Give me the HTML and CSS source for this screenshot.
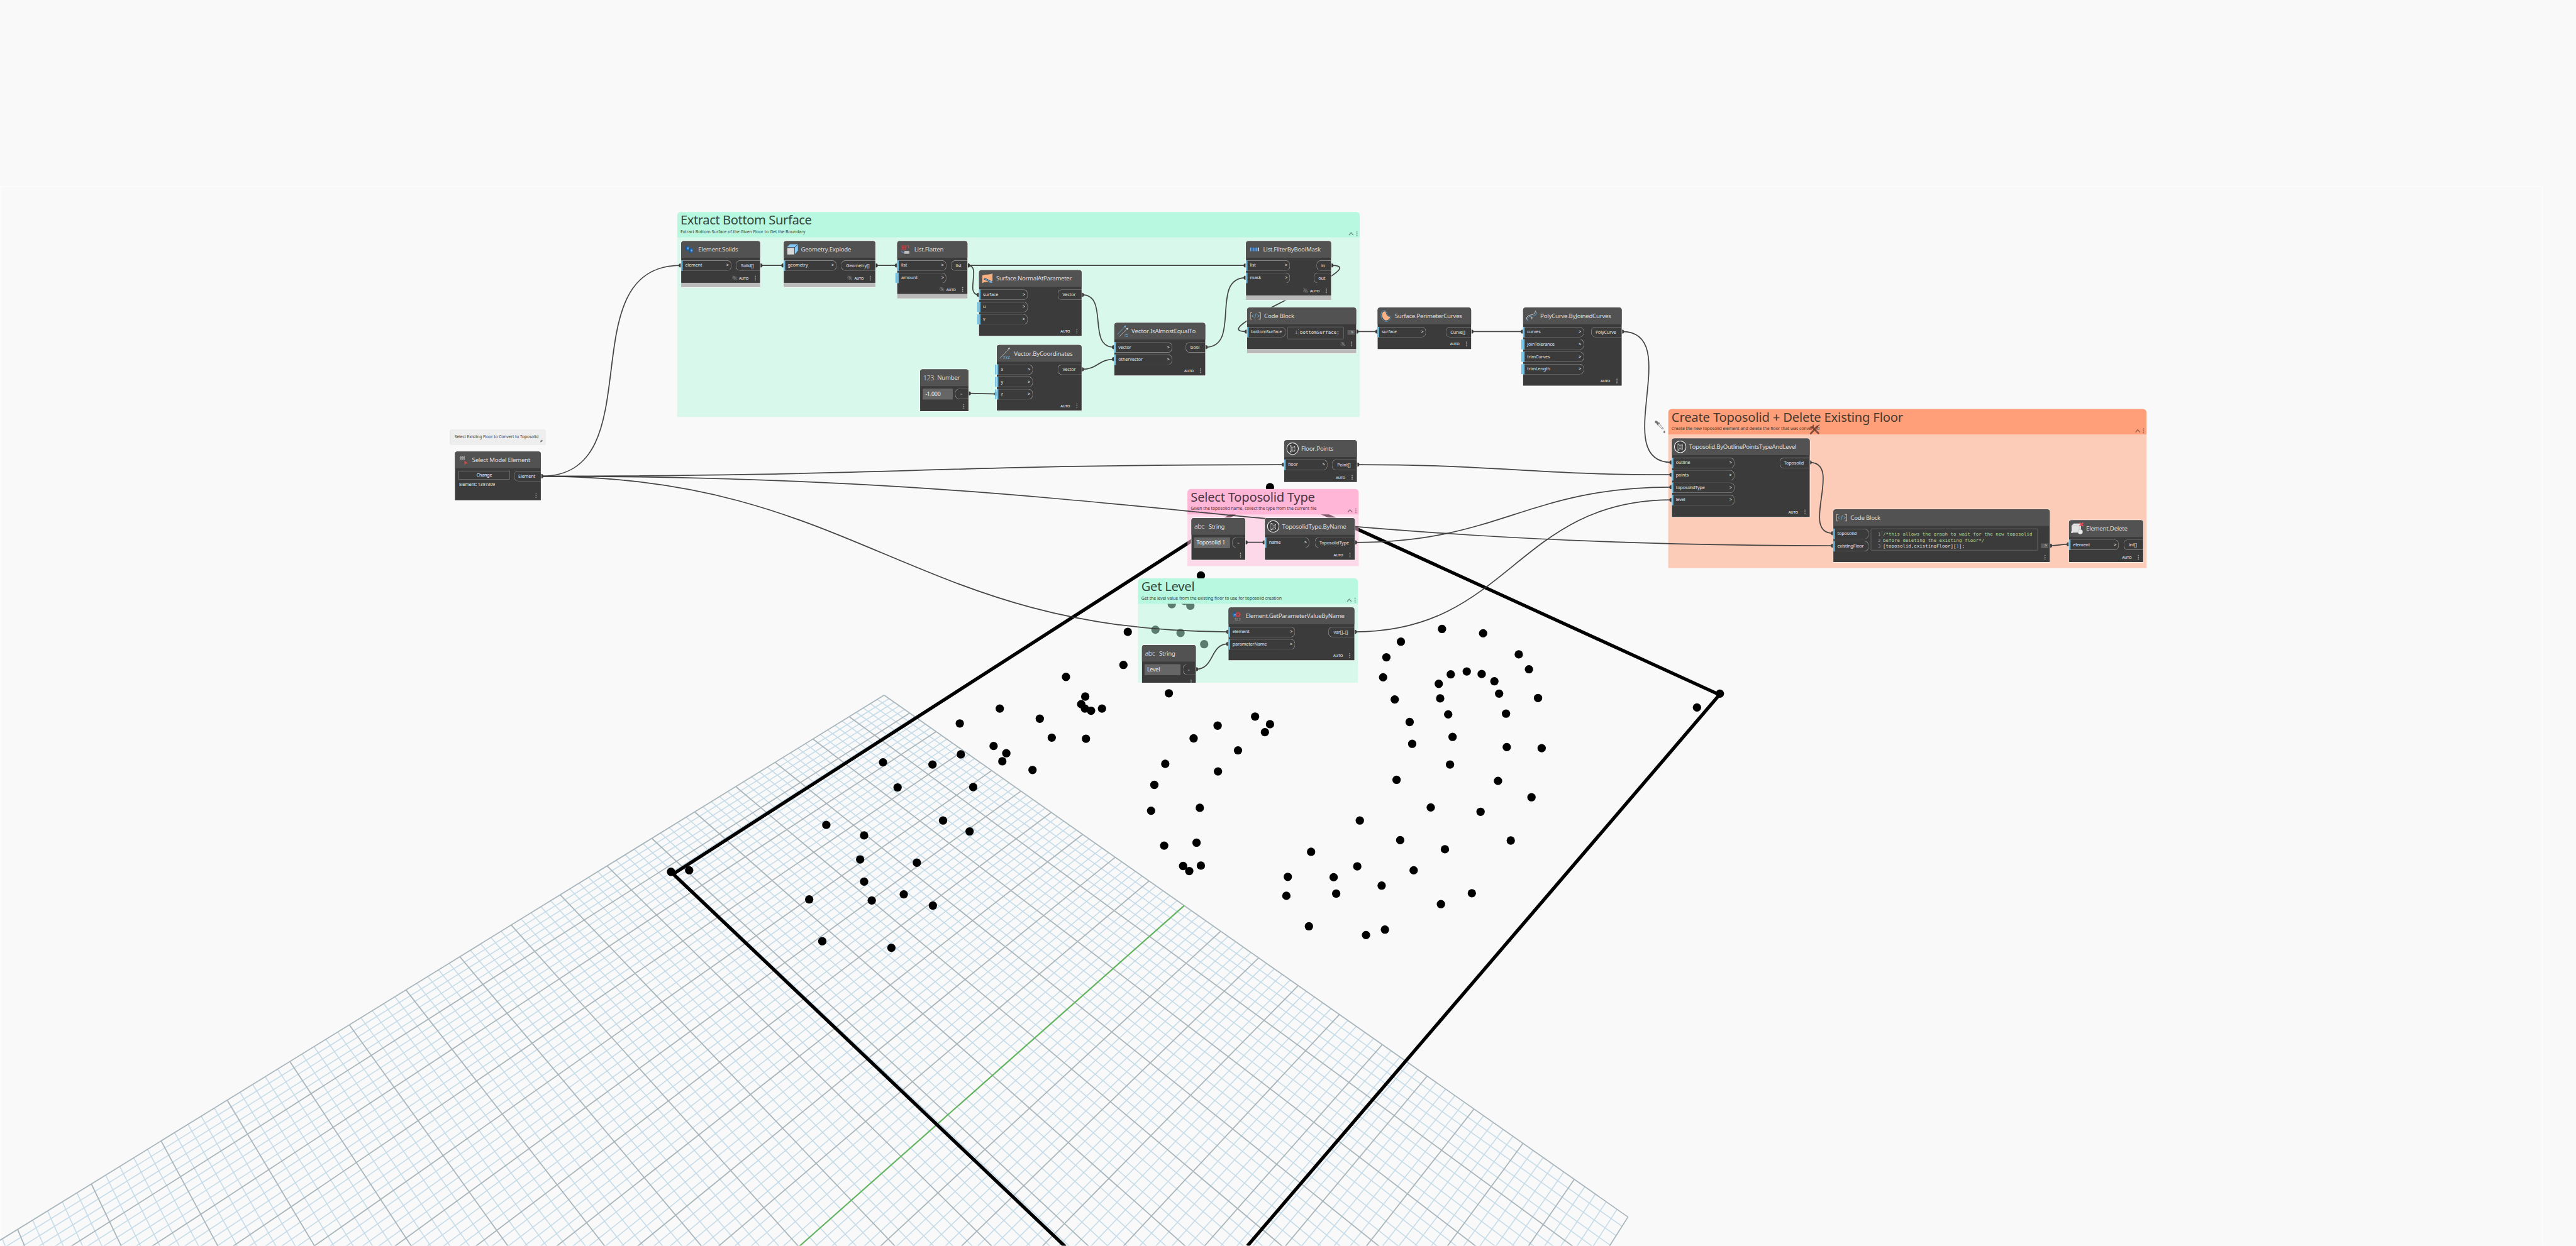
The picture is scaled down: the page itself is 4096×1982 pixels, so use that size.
FILE: index.html
```html
<!DOCTYPE html>
<html lang="en">
<head>
<meta charset="utf-8">
<title>Floor to Toposolid graph</title>
<link rel="stylesheet" href="styles.css">
</head>
<body>
<svg class="defs" width="0" height="0">
  <symbol id="eye" viewBox="0 0 16 16"><path d="M1 8C3 4.5 5.300 3 8 3s5 1.500 7 5c-2 3.500-4.300 5-7 5S3 11.500 1 8zM1.500 1.500l13 13M4 1.500l11 11" fill="none" stroke="#a8a8a8" stroke-width=".9" stroke-dasharray="2 .7"/><circle cx="8" cy="8" r="2.400" fill="none" stroke="#a8a8a8" stroke-width=".9"/></symbol>
  <symbol id="dots" viewBox="0 0 4 14"><circle cx="2" cy="2" r="1.500" fill="#a9a9a9"/><circle cx="2" cy="7" r="1.500" fill="#a9a9a9"/><circle cx="2" cy="12" r="1.500" fill="#a9a9a9"/></symbol>
  <symbol id="menu" viewBox="0 0 30 16"><path d="M2 12l6-7 6 7" fill="none" stroke="#000" stroke-opacity=".42" stroke-width="2.400"/><g fill="none" stroke="#000" stroke-opacity=".5" stroke-width=".9"><circle cx="24" cy="3" r="1.300"/><circle cx="24" cy="8" r="1.300"/><circle cx="24" cy="13" r="1.300"/></g></symbol>
  <symbol id="topo" viewBox="0 0 34 34"><circle cx="17" cy="17" r="16" fill="#3d3d3d" stroke="#f2f2f2" stroke-width="1.900"/><path d="M10.500 8.500l13 3v12.500l-13 3z" fill="#2b2b2b" stroke="#d5d5d5" stroke-width="1.100"/><path d="M14 12.500l7 1.500v7l-7 1.500zM11 9l3 3.500M23 12l-2 2M23 23.500l-2-2.500M11 26.500l3-4M17.500 13v9" fill="none" stroke="#d5d5d5"/><g fill="#eee"><circle cx="11.500" cy="9.500" r="1.200"/><circle cx="22.500" cy="12" r="1.200"/><circle cx="22.500" cy="23" r="1.200"/><circle cx="11.500" cy="25.500" r="1.200"/></g></symbol>
  <symbol id="code" viewBox="0 0 30 20"><path d="M6 1H1v18h5M24 1h5v18h-5" fill="none" stroke="#e8d9cb" stroke-width="1.400"/><path d="M9.500 6.500L4.500 10l5 3.500M20.500 6.500l5 3.500-5 3.500M17 3l-4.500 13.500" fill="none" stroke="#6db9e8" stroke-width="1.400"/></symbol>
</svg>

<main class="stage">
  <div class="viewport"></div>
  <svg class="layer preview" viewBox="0 0 7083 3427">
    <g id="minor"></g>
    <g id="major"></g>
    <line id="axis" class="axis"/>
    <polyline class="outline" points="2929,3429 1851,2404 3495,1347 4728,1911 3430,3427"/>
    <g id="points"></g>
  </svg>

  <section class="group mint" id="g-extract">
    <header><h2>Extract Bottom Surface</h2><p>Extract Bottom Surface of the Given Floor to Get the Boundary</p><svg class="menu"><use href="#menu"/></svg></header>
  </section>
  <section class="group pink" id="g-type">
    <header><h2>Select Toposolid Type</h2><p>Given the toposolid name, collect the type from the current file</p><svg class="menu"><use href="#menu"/></svg></header>
  </section>
  <section class="group mint" id="g-level">
    <header><h2>Get Level</h2><p>Get the level value from the existing floor to use for toposolid creation</p><svg class="menu"><use href="#menu"/></svg></header>
  </section>
  <section class="group orange" id="g-create">
    <header><h2>Create Toposolid + Delete Existing Floor</h2><p>Create the new toposolid element and delete the floor that was converted</p><svg class="menu"><use href="#menu"/></svg></header>
  </section>

  <svg class="layer" viewBox="0 0 7083 3427">
    <g transform="translate(4976 1168)" class="tools"><path d="M3 24.500L21 5" stroke-width="5"/><path d="M17 8l9-7" stroke-width="2.500"/><path d="M24 24L7 7" stroke-width="5"/><path d="M3 7a5 5 0 0 0 7-5" stroke-width="4"/></g>
    <g transform="translate(4549 1156)"><path d="M2 2c3-2 7 0 8 4l3 0 2 2-6 6-2-2 0-3C3 9 0 5 2 2z" fill="#757575"/><path d="M9 12l11 11 4 1-1-4L13 9" fill="none" stroke="#757575" stroke-width="1.600"/><path d="M27 28c-3 4-3 7 0 7s4-3 0-7z" fill="#757575"/></g>
    <g id="wires"></g>
  </svg>

  <aside class="note"><p>Select Existing Floor to Convert to Toposolid</p><svg viewBox="0 0 10 10"><path d="M5.500 0L10 4 8 4.500 6.500 7 5 8 4 6.800.5 9.800 3 6 1.500 4.500 3 3.500 5.200 2z" fill="#777"/></svg></aside>

  <article class="node" id="n-select">
    <header><svg class="icon" viewBox="0 0 30 30"><path d="M7 5h12M5 8.200h14M5 11h14M5 14h14M8 5v3M13 5v3M18 5v3M6 8v3M11 8v3M16 8v3M8 11v3M13 11v3M18 11v3" stroke="#bcbcbc" stroke-width="1.200"/><path d="M18 17l10 7.500-5.500.5-4 4z" fill="#d24a48"/></svg><h3>Select Model Element</h3></header>
    <div class="ports">
      <div class="pick"><button>Change</button><span>Element: 1397309</span></div>
      <div class="col"><div class="out">Element</div></div>
    </div>
    <footer><svg class="dots"><use href="#dots"/></svg></footer>
  </article>

  <article class="node frozen" id="n-solids">
    <header><svg class="icon" viewBox="0 0 30 30"><defs><radialGradient id="ball" cx=".65" cy=".5" r=".6"><stop offset="0" stop-color="#9fd0f5"/><stop offset=".4" stop-color="#2877c2"/><stop offset="1" stop-color="#124a87"/></radialGradient></defs><ellipse cx="9" cy="12" rx="5.500" ry="7" fill="url(#ball)"/><ellipse cx="19" cy="18" rx="5.500" ry="7" fill="url(#ball)"/></svg><h3>Element.Solids</h3></header>
    <div class="ports"><div class="col"><div class="in">element<i>&gt;</i></div></div><div class="col"><div class="out">Solid[]</div></div></div>
    <footer><svg class="eye"><use href="#eye"/></svg><span>AUTO</span><svg class="dots"><use href="#dots"/></svg></footer>
  </article>

  <article class="node frozen" id="n-explode">
    <header><svg class="icon" viewBox="0 0 30 30"><path d="M1 10h20v19H1z" fill="#dadada"/><path d="M1 9L9 1h22l-9 8z" fill="#82c7f5"/><path d="M22 29V10l9-9v17z" fill="#82c7f5"/><path d="M1 29V10h20.500v19M21.500 10L31 1" fill="none" stroke="#2f3a44" stroke-width="1.300"/></svg><h3>Geometry.Explode</h3></header>
    <div class="ports"><div class="col"><div class="in">geometry<i>&gt;</i></div></div><div class="col"><div class="out">Geometry[]</div></div></div>
    <footer><svg class="eye"><use href="#eye"/></svg><span>AUTO</span><svg class="dots"><use href="#dots"/></svg></footer>
  </article>

  <article class="node frozen" id="n-flatten">
    <header><svg class="icon" viewBox="0 0 30 30"><path d="M4 4h12v12H4z" fill="#c0474b"/><path d="M8 4v12M12 4v12M4 8h12M4 12h12" stroke="#7c3638"/><path d="M18 5h5v6" fill="none" stroke="#a25557" stroke-width="2"/><path d="M4 19c1 4 3 5 7 5" fill="none" stroke="#5b7fb5" stroke-width="2.200"/><path d="M12 19h13v8H12z" fill="#e5e5e5"/><path d="M15 19v8M18.500 19v8M22 19v8M12 22h13M12 25h13" stroke="#777" stroke-width=".8"/></svg><h3>List.Flatten</h3></header>
    <div class="ports"><div class="col"><div class="in">list<i>&gt;</i></div><div class="in open">amount<i>&gt;</i></div></div><div class="col"><div class="out">list</div></div></div>
    <footer><svg class="eye"><use href="#eye"/></svg><span>AUTO</span><svg class="dots"><use href="#dots"/></svg></footer>
  </article>

  <article class="node" id="n-normal">
    <header><svg class="icon" viewBox="0 0 30 30"><path d="M1 7c8-5 20 0 28-6v21c-8 5-20 0-28 6z" fill="#f8b183"/><path d="M6 15l18 9" stroke="#24384a" stroke-width="4.500"/><path d="M6 15l18 9" stroke="#69b5e8" stroke-width="2"/><path d="M29 27l-9-.5 4-7z" fill="#69b5e8"/></svg><h3>Surface.NormalAtParameter</h3></header>
    <div class="ports"><div class="col"><div class="in">surface<i>&gt;</i></div><div class="in open">u<i>&gt;</i></div><div class="in open">v<i>&gt;</i></div></div><div class="col"><div class="out">Vector</div></div></div>
    <footer><span>AUTO</span><svg class="dots"><use href="#dots"/></svg></footer>
  </article>

  <article class="node" id="n-number">
    <header><span class="glyph">123</span><h3>Number</h3></header>
    <div class="ports"><div class="field">-1.000</div><div class="col"><div class="out tiny">&gt;</div></div></div>
    <footer><svg class="dots"><use href="#dots"/></svg></footer>
  </article>

  <article class="node" id="n-coords">
    <header><svg class="icon" viewBox="0 0 30 34"><path d="M0 31L26 3" stroke="#e6e6e6" stroke-width="1.200"/><path d="M29 0l-2 6-4-3.500z" fill="#e6e6e6"/><text x="9" y="34" class="xyz">XYZ</text></svg><h3>Vector.ByCoordinates</h3></header>
    <div class="ports"><div class="col"><div class="in open">x<i>&gt;</i></div><div class="in open">y<i>&gt;</i></div><div class="in open">z<i>&gt;</i></div></div><div class="col"><div class="out">Vector</div></div></div>
    <footer><span>AUTO</span><svg class="dots"><use href="#dots"/></svg></footer>
  </article>

  <article class="node" id="n-equal">
    <header><svg class="icon" viewBox="0 0 32 34"><path d="M0 27L23 3" stroke="#6db9e8" stroke-width="1.400"/><path d="M26 0l-2 6.500-5-4z" fill="#6db9e8"/><path d="M6 33L29 10" stroke="#e6e6e6" stroke-width="1.200"/><path d="M32 7l-2 6-4.500-4z" fill="#e6e6e6"/><path d="M22 27c3-3 6 3 9 0M22 32c3-3 6 3 9 0" fill="none" stroke="#6db9e8" stroke-width="1.800"/></svg><h3>Vector.IsAlmostEqualTo</h3></header>
    <div class="ports"><div class="col"><div class="in">vector<i>&gt;</i></div><div class="in">otherVector<i>&gt;</i></div></div><div class="col"><div class="out">bool</div></div></div>
    <footer><span>AUTO</span><svg class="dots"><use href="#dots"/></svg></footer>
  </article>

  <article class="node frozen" id="n-filter">
    <header><svg class="icon" viewBox="0 0 30 30"><path d="M3 10h24v10H3z" fill="#2f6eb0"/><path d="M5 10v10M12 10v10M17 10v10M21 10v10" stroke="#b9cfe4" stroke-width="1.300"/><path d="M26 10v10" stroke="#f4f4f4" stroke-width="2.400"/></svg><h3>List.FilterByBoolMask</h3></header>
    <div class="ports"><div class="col"><div class="in">list<i>&gt;</i></div><div class="in">mask<i>&gt;</i></div></div><div class="col"><div class="out short">in</div><div class="out">out</div></div></div>
    <footer><svg class="eye"><use href="#eye"/></svg><span>AUTO</span><svg class="dots"><use href="#dots"/></svg></footer>
  </article>

  <article class="node frozen" id="n-code1">
    <header><svg class="icon"><use href="#code"/></svg><h3>Code Block</h3></header>
    <div class="ports"><div class="col"><div class="in">bottomSurface</div></div>
      <div class="editor"><ol><li><b>bottomSurface;</b></li></ol></div><div class="go">&gt;</div></div>
    <footer><svg class="eye"><use href="#eye"/></svg><svg class="dots"><use href="#dots"/></svg></footer>
  </article>

  <article class="node" id="n-perimeter">
    <header><svg class="icon" viewBox="0 0 32 36"><path d="M10 1C3 2 0 9 1 18s7 17 15 17 14-6 15-11-3-4-7-6-4-5-6-10-4-8-8-7z" fill="#2e4354" stroke="#73bdeb" stroke-width="1.300"/><path d="M11 4C5 5 3 11 4 18s6 14 12 14 11-4 12-8-3-3-6-5-5-6-6-10-2-6-5-5z" fill="#f8b183"/></svg><h3>Surface.PerimeterCurves</h3></header>
    <div class="ports"><div class="col"><div class="in">surface<i>&gt;</i></div></div><div class="col"><div class="out">Curve[]</div></div></div>
    <footer><span>AUTO</span><svg class="dots"><use href="#dots"/></svg></footer>
  </article>

  <article class="node" id="n-poly">
    <header><svg class="icon" viewBox="0 0 32 32"><path d="M1 27c0-22 24-6 27-26" fill="none" stroke="#e6e6e6" stroke-width="1.500"/><path d="M4 30c2-14 4-12 12-13M19 16c8 0 11-3 12-12" fill="none" stroke="#6db9e8" stroke-width="1.600"/><path d="M17 18v8M13.500 22h7" stroke="#f0e4d8" stroke-width="1.200"/></svg><h3>PolyCurve.ByJoinedCurves</h3></header>
    <div class="ports"><div class="col"><div class="in">curves<i>&gt;</i></div><div class="in open">joinTolerance<i>&gt;</i></div><div class="in open">trimCurves<i>&gt;</i></div><div class="in open">trimLength<i>&gt;</i></div></div><div class="col"><div class="out">PolyCurve</div></div></div>
    <footer><span>AUTO</span><svg class="dots"><use href="#dots"/></svg></footer>
  </article>

  <article class="node" id="n-points">
    <header><svg class="icon big"><use href="#topo"/></svg><h3>Floor.Points</h3></header>
    <div class="ports"><div class="col"><div class="in">floor<i>&gt;</i></div></div><div class="col"><div class="out">Point[]</div></div></div>
    <footer><span>AUTO</span><svg class="dots"><use href="#dots"/></svg></footer>
  </article>

  <article class="node" id="n-string1">
    <header><span class="glyph">abc</span><h3>String</h3></header>
    <div class="ports"><div class="field">Toposolid 1</div><div class="col"><div class="out tiny">&gt;</div></div></div>
    <footer><svg class="dots"><use href="#dots"/></svg></footer>
  </article>

  <article class="node" id="n-byname">
    <header><svg class="icon big"><use href="#topo"/></svg><h3>ToposolidType.ByName</h3></header>
    <div class="ports"><div class="col"><div class="in">name<i>&gt;</i></div></div><div class="col"><div class="out">ToposolidType</div></div></div>
    <footer><span>AUTO</span><svg class="dots"><use href="#dots"/></svg></footer>
  </article>

  <article class="node" id="n-param">
    <header><svg class="icon" viewBox="0 0 30 30"><ellipse cx="8" cy="12" rx="4.500" ry="6" fill="#2a72bd"/><circle cx="8" cy="6" r="3" fill="#1a5494"/><circle cx="10" cy="12" r="2" fill="#8fc7f2"/><circle cx="18" cy="11.500" r="5.500" fill="none" stroke="#c9444a" stroke-width="3.200" stroke-dasharray="2.600 .9"/><circle cx="18" cy="11.500" r="4" fill="none" stroke="#c9444a" stroke-width="2"/><text x="8" y="28" class="num">12.3</text></svg><h3>Element.GetParameterValueByName</h3></header>
    <div class="ports"><div class="col"><div class="in">element<i>&gt;</i></div><div class="in">parameterName<i>&gt;</i></div></div><div class="col"><div class="out">var[]..[]</div></div></div>
    <footer><span>AUTO</span><svg class="dots"><use href="#dots"/></svg></footer>
  </article>

  <article class="node" id="n-string2">
    <header><span class="glyph">abc</span><h3>String</h3></header>
    <div class="ports"><div class="field">Level</div><div class="col"><div class="out tiny">&gt;</div></div></div>
    <footer><svg class="dots"><use href="#dots"/></svg></footer>
  </article>

  <article class="node" id="n-outline">
    <header><svg class="icon big"><use href="#topo"/></svg><h3>Toposolid.ByOutlinePointsTypeAndLevel</h3></header>
    <div class="ports"><div class="col"><div class="in">outline<i>&gt;</i></div><div class="in">points<i>&gt;</i></div><div class="in">toposolidType<i>&gt;</i></div><div class="in">level<i>&gt;</i></div></div><div class="col"><div class="out">Toposolid</div></div></div>
    <footer><span>AUTO</span><svg class="dots"><use href="#dots"/></svg></footer>
  </article>

  <article class="node" id="n-code2">
    <header><svg class="icon"><use href="#code"/></svg><h3>Code Block</h3></header>
    <div class="ports"><div class="col"><div class="in">toposolid</div><div class="in">existingFloor</div></div>
      <div class="editor"><ol><li><em>/*this allows the graph to wait for the new toposolid</em></li><li><em>before deleting the existing floor*/</em></li><li><b>[toposolid,existingFloor][<u>1</u>];</b></li></ol></div><div class="go">&gt;</div></div>
    <footer><svg class="dots"><use href="#dots"/></svg></footer>
  </article>

  <article class="node" id="n-delete">
    <header><svg class="icon big" viewBox="0 0 34 34"><path d="M1 9l6-6h20v20l-5 5H1z" fill="#e3e3e3"/><path d="M1 9h21v19M22 9l5-6" fill="none" stroke="#bdbdbd"/><path d="M0 25h4v4H0z" fill="#f5f5f5"/><circle cx="25" cy="26" r="6.500" fill="#ededed" stroke="#a9a9a9"/><path d="M23 1l10 9M33 1l-10 9" stroke="#e8505b" stroke-width="3.600"/></svg><h3>Element.Delete</h3></header>
    <div class="ports"><div class="col"><div class="in">element<i>&gt;</i></div></div><div class="col"><div class="out">int[]</div></div></div>
    <footer><span>AUTO</span><svg class="dots"><use href="#dots"/></svg></footer>
  </article>
</main>
<script src="scene.js"></script>
</body>
</html>
```
FILE: styles.css
```css
html, body { margin: 0; width: 100%; height: 100%; overflow: hidden; background: #f9f9f9; }
body { position: relative; font-family: "Noto Sans", "Open Sans", sans-serif; }
h2, h3, p, ol { margin: 0; padding: 0; font-weight: 400; }
.defs { position: absolute; }

.stage { position: absolute; left: 0; top: 0; width: 7083px; height: 3427px; overflow: hidden; transform: scale(.578286); transform-origin: 0 0; }
.viewport { position: absolute; left: 0; top: 512px; right: 90px; bottom: 0; border: 3px solid #fcfcfc; border-bottom: 0; box-sizing: border-box; }
.layer { position: absolute; left: 0; top: 0; width: 7083px; height: 3427px; }

/* 3D preview */
#minor line { stroke: #c6dce9; stroke-width: 2.8; }
#major line { stroke: #a9b6bc; stroke-width: 3.1; }
.axis { stroke: #62b460; stroke-width: 3.8; }
.outline { fill: none; stroke: #000; stroke-width: 9.4; stroke-linejoin: round; }
#points circle { fill: #000; }

/* Wires */
#wires path { fill: none; stroke: #3c3c3c; stroke-opacity: .95; stroke-width: 3; }
#wires circle { fill: #3b3b3b; }
.tools path { stroke: #7a4334; stroke-opacity: .92; stroke-linecap: round; fill: none; }

/* Groups */
.group { position: absolute; border-radius: 10px 10px 0 0; overflow: hidden; }
.group header { display: grid; grid-template-rows: 44px 20px; height: 70px; padding: 0 9px; position: relative; }
.group h2 { font-size: 35px; line-height: 44px; letter-spacing: -.023em; white-space: nowrap; }
.group p { font-size: 12px; line-height: 20px; letter-spacing: -.01em; white-space: nowrap; }
.menu { position: absolute; right: 2px; bottom: 2px; width: 30px; height: 16px; }
.mint { background: rgba(184, 248, 224, .5); color: #33463d; }
.mint header { background: #b8f8e0; }
.pink { background: rgba(255, 183, 216, .5); color: #4b3541; }
.pink header { background: #ffb6d7; }
.orange { background: rgba(255, 160, 122, .5); color: #46392f; }
.orange header { background: #ff9f7a; }
#g-extract { left: 1862px; top: 583px; width: 1877px; height: 564px; }
#g-type { left: 3265px; top: 1345px; width: 471px; height: 212px; }
#g-level { left: 3129px; top: 1591px; width: 604.5px; height: 287px; }
#g-create { left: 4587px; top: 1125px; width: 1315px; height: 438px; }
#g-type h2, #g-level h2 { letter-spacing: -.014em; }
#g-create h2 { letter-spacing: -.01em; }

.note { position: absolute; left: 1239px; top: 1183px; width: 261px; height: 40px; background: #eee; box-shadow: 0 0 4px rgba(0, 0, 0, .22); color: #3c3c3c; }
.note p { padding-left: 11px; font-size: 11.6px; line-height: 36px; letter-spacing: -.015em; white-space: nowrap; }
.note svg { position: absolute; right: 7px; bottom: 5px; width: 9px; height: 9px; }

/* Nodes */
.node { position: absolute; display: flex; flex-direction: column; background: #3b3b3b; border-radius: 7px 7px 0 0; box-shadow: 0 0 0 1.3px rgba(255, 255, 255, .9); color: #e4e4e4; }
.node.frozen::after { content: ""; position: absolute; left: 0; right: 0; top: 100%; height: 12px; background: #b9b9b9; box-shadow: 0 1.3px 0 rgba(255, 255, 255, .9); }
.node header { display: grid; grid-template-columns: 39px 1fr; align-items: center; height: 46px; padding-left: 8px; background: #525252; border-radius: 7px 7px 0 0; }
.node h3 { font-size: 16.7px; line-height: 22px; letter-spacing: -.026em; font-kerning: none; white-space: nowrap; color: #dedede; }
.icon { width: 30px; height: 32px; overflow: visible; }
.icon.big { width: 34px; height: 34px; margin-left: -2px; }
.glyph { font-family: "Open Sans", sans-serif; font-weight: 300; font-size: 19px; letter-spacing: -.05em; color: #e8e8e8; }
.xyz { font-size: 11.5px; fill: #6db9e8; }
.num { font-size: 8.5px; fill: #aaa; }
.ports { display: flex; justify-content: space-between; align-items: flex-start; padding-top: 7.3px; }
.col { display: flex; flex-direction: column; align-items: flex-end; gap: 5.5px; }
.in, .out { position: relative; box-sizing: border-box; height: 28.5px; display: flex; align-items: center; font-size: 12.5px; line-height: 24px; letter-spacing: -.02em; border: 1.3px solid #a3a3a3; white-space: nowrap; }
.in { width: var(--in); justify-content: space-between; border-left: 0; border-radius: 0 12px 12px 0; padding: 0 6px 1px 11px; }
.in::before { content: ""; position: absolute; left: 0; top: -1.3px; bottom: -1.3px; width: 4.4px; background: #6ac0e7; }
.in.open::after { content: ""; position: absolute; left: -5.5px; top: -.5px; bottom: -.5px; width: 4.4px; background: #6ac0e7; }
.in i { font-style: normal; font-size: 12px; font-weight: 600; }
.out { width: var(--out); justify-content: center; border-right: 0; border-radius: 12px 0 0 12px; padding-right: 4px; }
.out.short { width: 40px; }
.out.tiny { font-size: 10px; }
.node footer { display: flex; justify-content: flex-end; align-items: center; height: 26.5px; margin-top: auto; padding-right: 11px; font-size: 10px; letter-spacing: -.03em; font-weight: 500; color: #f0f0f0; }
.dots { width: 4px; height: 14px; margin-left: 17px; }
.eye { width: 15px; height: 15px; margin-right: 5px; }
.eye + .dots { margin-left: 9px; }

.field { box-sizing: border-box; width: var(--field); height: 30px; margin-left: 6.5px; padding-left: 7.5px; background: #666; font-size: 15.3px; line-height: 28px; letter-spacing: -.02em; color: #f0f0f0; white-space: nowrap; }
.pick { display: grid; grid-template-rows: 24px 26px; width: 141px; margin-left: 10px; }
.pick button { background: none; border: 1.2px solid #8e8e8e; color: #fff; font: inherit; font-size: 12.2px; letter-spacing: -.02em; padding: 0 0 2px; }
.pick span { font-size: 12.2px; line-height: 26px; letter-spacing: -.02em; padding-left: 1.5px; white-space: nowrap; color: #f0f0f0; }

.editor { box-sizing: border-box; width: var(--editor); height: var(--editor-h); border: 1.2px solid #7e7e7e; border-radius: 2px; padding: 7px 0 0 12px; }
.editor ol { list-style: none; counter-reset: n; font: 12.87px/16px "DejaVu Sans Mono", monospace; letter-spacing: 0; }
.editor li { counter-increment: n; display: flex; white-space: pre; }
.editor li::before { content: counter(n); width: 10px; padding-left: 7px; margin-right: 3px; color: #9a9a9a; border-right: 1px dotted #888; box-sizing: content-box; }
.editor b { font-weight: 400; color: #e2e2e2; }
.editor em { font-style: normal; color: #b5d493; }
.editor u { text-decoration: none; color: #6aaed6; }
.go { width: 20px; height: 13px; margin-right: 4px; background: #5e5e5e; font-size: 11px; line-height: 12px; text-align: right; padding-right: 4px; box-sizing: border-box; }

#n-select { left: 1251px; top: 1242px; width: 236px; height: 134px; --out: 74.5px; }
#n-solids { left: 1873px; top: 663px; width: 217px; height: 115px; --in: 138px; --out: 66.7px; }
#n-explode { left: 2155px; top: 663px; width: 252px; height: 115px; --in: 145px; --out: 94px; }
#n-flatten { left: 2467px; top: 663px; width: 193px; height: 146px; --in: 135px; --out: 45.5px; }
#n-normal { left: 2692px; top: 743px; width: 282px; height: 181px; --in: 133.5px; --out: 65.6px; }
#n-number { left: 2530px; top: 1016px; width: 133px; height: 115px; --field: 83px; --out: 37px; }
#n-coords { left: 2741px; top: 949px; width: 233px; height: 180px; --in: 98.7px; --out: 65.6px; }
#n-equal { left: 3064px; top: 888px; width: 250px; height: 145px; --in: 158.5px; --out: 53.6px; }
#n-filter { left: 3426px; top: 663px; width: 234px; height: 150px; --in: 121px; --out: 47.8px; }
#n-code1 { left: 3429px; top: 846px; width: 300px; height: 113.5px; --in: 105.6px; --editor: 155px; --editor-h: 33.5px; }
#n-perimeter { left: 3788px; top: 846px; width: 257px; height: 113.5px; --in: 133px; --out: 70px; }
#n-poly { left: 4188px; top: 846px; width: 271px; height: 215px; --in: 166.6px; --out: 84.5px; }
#n-points { left: 3531px; top: 1211px; width: 200px; height: 115px; --in: 119px; --out: 68.7px; }
#n-string1 { left: 3276px; top: 1425px; width: 148px; height: 115px; --field: 99.3px; --out: 36px; }
#n-byname { left: 3478px; top: 1425px; width: 247px; height: 115px; --in: 122px; --out: 110px; }
#n-param { left: 3378px; top: 1671px; width: 346px; height: 145px; --in: 182.6px; --out: 71.6px; }
#n-string2 { left: 3140px; top: 1774px; width: 148px; height: 115px; --field: 99.3px; --out: 36px; clip-path: inset(-2px -2px 11px -2px); }
#n-outline { left: 4597px; top: 1206px; width: 378.5px; height: 215.5px; --in: 171.7px; --out: 83px; }
#n-code2 { left: 5041px; top: 1401px; width: 595px; height: 145px; --in: 97px; --editor: 459px; --editor-h: 60px; }
#n-delete { left: 5689px; top: 1431px; width: 204px; height: 115px; --in: 137px; --out: 54px; }
#n-code1 .editor { margin-left: -4px; padding-top: 6px; }
#n-code2 .editor { margin-left: -4px; }
#n-code1 .go { margin-top: 8.5px; }
#n-code2 .go { margin-top: 41px; }
#n-outline h3, #n-param h3, #n-normal h3 { letter-spacing: -.034em; }
```
FILE: scene.js
```js
const NS = 'http://www.w3.org/2000/svg';
const add = (parent, tag, attrs) => {
  const el = document.createElementNS(NS, tag);
  for (const k in attrs) el.setAttribute(k, attrs[k]);
  document.getElementById(parent).appendChild(el);
};

// Perspective projection of the ground grid; u and v run 0..20 in major cells.
const project = (u, v) => {
  const w = 1 - 0.01932 * u - 0.0162 * v;
  return [(2431 - 141.09 * u + 29.75 * v) / w, (1912 + 21.12 * u + 17.55 * v) / w];
};
const segment = (a, b) => ({ x1: a[0].toFixed(1), y1: a[1].toFixed(1), x2: b[0].toFixed(1), y2: b[1].toFixed(1) });
for (let i = 0; i <= 100; i++) {
  const t = i / 5;
  const layer = i % 5 ? 'minor' : 'major';
  add(layer, 'line', segment(project(t, 0), project(t, 20)));
  if (i !== 50) add(layer, 'line', segment(project(0, t), project(20, t)));
}
const axis = segment(project(0, 10), project(10, 10));
for (const k in axis) document.getElementById('axis').setAttribute(k, axis[k]);

// Floor shape points
[[2931,1862],[3214,1907],[2984,1916],[2973,1937],[2983,1949],[3000,1955],[3030,1949],[2749,1949],[2859,1977],[2639,1990],
 [2892,2029],[2986,2032],[3282,2031],[2732,2052],[2767,2072],[2642,2075],[2756,2094],[2428,2097],[2564,2103],[3204,2101],
 [2839,2118],[3174,2159],[2468,2166],[2676,2165],[3165,2230],[2593,2257],[2272,2269],[2376,2298],[2666,2287],[3201,2326],
 [2365,2364],[2521,2373],[3253,2382],[3270,2396],[1845,2398],[1895,2394],[2376,2425],[2485,2460],[2225,2474],[2397,2477],
 [2565,2491],[2261,2589],[2451,2607],[3101,1738],[3089,1829],[3302,1583],[3222,1662],[3257,1653],[3273,1666],[3177,1732],
 [3246,1741],[3311,1772],[3492,1340],[3965,1730],[4078,1742],[3852,1765],[3812,1808],[3803,1863],[4176,1800],[4204,1841],
 [3989,1855],[4033,1847],[4074,1854],[4109,1874],[3956,1881],[4122,1908],[3835,1924],[3960,1921],[4229,1920],[4141,1963],
 [3982,1965],[3451,1971],[3348,1996],[3492,1992],[3478,2014],[3876,1986],[3404,2064],[3883,2046],[3994,2027],[4143,2055],
 [4239,2058],[3349,2122],[3987,2103],[3840,2145],[4119,2148],[4211,2193],[3299,2222],[3934,2221],[4071,2233],[3739,2257],
 [3290,2318],[3850,2311],[4154,2312],[3973,2336],[3605,2343],[3302,2381],[3732,2383],[3541,2412],[3667,2413],[3887,2394],
 [3799,2436],[3537,2464],[3674,2458],[4047,2457],[3962,2487],[3599,2548],[3808,2557],[3756,2572],[4729,1908],[4666,1946]
].forEach(([cx, cy]) => add('points', 'circle', { cx, cy, r: 11.5 }));

// Connectors: x1, y1, x2, y2
[[1488,1310,1872,730],[2091,730,2154,730],[2408,730,2466,730],[2661,730,3425,730],[2661,730,2691,811],
 [2975,811,3063,955],[2975,1016,3063,988],[2664,1082,2740,1083.5],[3315,955,3425,764],[3661,730,3428,912],
 [3730,912,3787,912],[4046,912,4187,912],[4460,912,4596,1272],[1488,1310,3530,1278],[3732,1278,4596,1306],
 [1488,1310,5040,1501],[1488,1310,3377,1738],[3725,1738,4596,1375],[3289,1840.7,3377,1771],[3425,1491.7,3477,1491.7],
 [3726,1492,4596,1340],[4976,1272,5040,1467],[5637,1501,5688,1497]
].forEach(([a, b, c, d]) => {
  const k = 0.45 * Math.hypot(c - a, d - b);
  add('wires', 'path', { d: `M${a} ${b}C${a + k} ${b} ${c - k} ${d} ${c} ${d}` });
  add('wires', 'circle', { cx: a, cy: b, r: 5.6 });
  add('wires', 'circle', { cx: c, cy: d, r: 5.6 });
});
```
